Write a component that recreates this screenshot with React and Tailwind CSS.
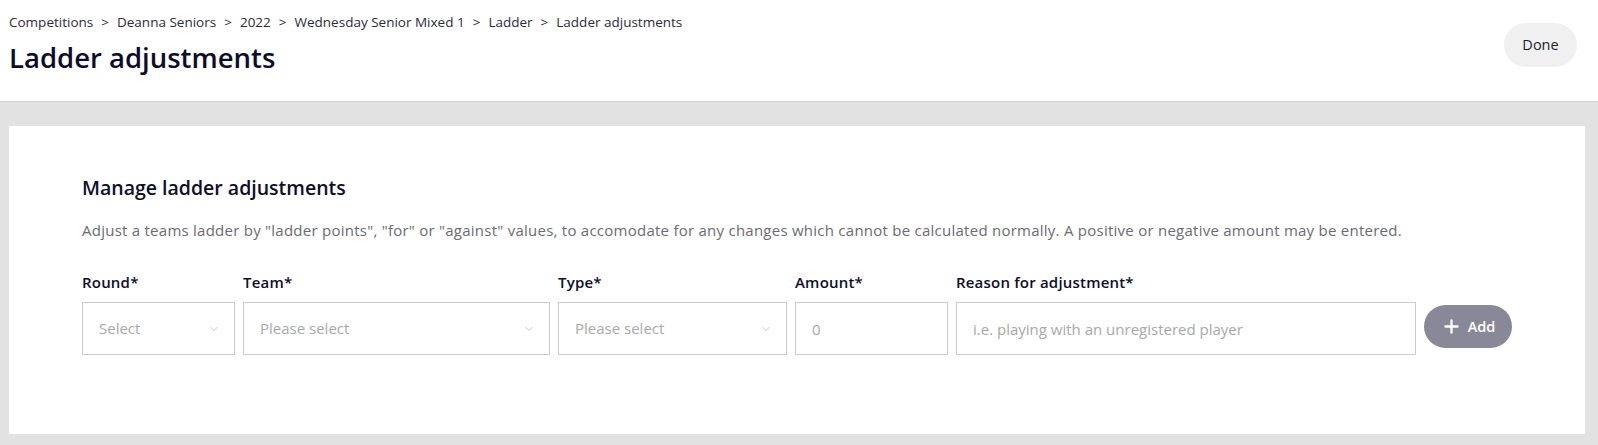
import { ChevronDown, Plus } from 'lucide-react'

const crumbs = ['Competitions', 'Deanna Seniors', '2022', 'Wednesday Senior Mixed 1', 'Ladder', 'Ladder adjustments']

export default function App() {
  return (
    <div className="min-h-[445px] bg-[#e2e2e2] font-['Open_Sans',sans-serif] text-[#0d0d2b]">
      {/* Page header */}
      <div className="h-[102px] bg-white border-b border-[#d2d2d2] flex items-start justify-between pl-[9px] pr-[21px]">
        <div>
          <div className="mt-[13px] flex items-center text-[13.5px] text-[#2b2b3b] leading-[18px]">
            {crumbs.map((c, i) => (
              <span key={c} className="flex items-center">
                {i > 0 && <span className="mx-[8px]">&gt;</span>}
                <span>{c}</span>
              </span>
            ))}
          </div>
          <h1 className="mt-[10px] text-[27.5px] font-semibold leading-[34px]">Ladder adjustments</h1>
        </div>
        <button
          type="button"
          className="mt-[23px] h-[44px] w-[73px] rounded-full bg-[#f0f0f0] text-[14.5px] text-[#1d1d2d]"
        >
          Done
        </button>
      </div>

      {/* Card */}
      <div className="pt-[24px] pl-[9px] pr-[13px] pb-[11px]">
        <div className="bg-white h-[308px] pl-[73px] pt-[49px]">
          <h2 className="text-[19.5px] font-semibold leading-[26px]">Manage ladder adjustments</h2>
          <p className="mt-[19px] text-[15px] text-[#6b6b72] leading-[20px] tracking-[0.25px]">
            Adjust a teams ladder by "ladder points", "for" or "against" values, to accomodate for any changes which cannot be calculated normally. A positive or negative amount may be entered.
          </p>

          <div className="mt-[32px] flex items-start gap-[8px]">
            <Field label="Round*" width="w-[153px]">
              <SelectBox placeholder="Select" />
            </Field>
            <Field label="Team*" width="w-[307px]">
              <SelectBox placeholder="Please select" />
            </Field>
            <Field label="Type*" width="w-[229px]">
              <SelectBox placeholder="Please select" />
            </Field>
            <Field label="Amount*" width="w-[153px]">
              <TextBox placeholder="0" />
            </Field>
            <Field label="Reason for adjustment*" width="w-[460px]">
              <TextBox placeholder="i.e. playing with an unregistered player" />
            </Field>
            <button
              type="button"
              className="mt-[33px] h-[43px] w-[88px] rounded-full bg-[#888899] text-white text-[14.5px] font-semibold inline-flex items-center justify-center gap-[6px]"
            >
              <Plus size={21} strokeWidth={2.6} />
              Add
            </button>
          </div>
        </div>
      </div>
    </div>
  )
}

function Field({ label, width, children }) {
  return (
    <div className={width}>
      <div className="text-[15px] font-semibold leading-[20px] tracking-[0.2px] text-[#0d0d2b]">{label}</div>
      <div className="mt-[10px]">{children}</div>
    </div>
  )
}

function SelectBox({ placeholder }) {
  return (
    <div className="h-[53px] border border-[#cccccc] flex items-center justify-between pl-[16px] pr-[14px]">
      <span className="text-[15px] text-[#a8a8a8]">{placeholder}</span>
      <ChevronDown size={12} strokeWidth={1.5} className="text-[#b0b0b0]" />
    </div>
  )
}

function TextBox({ placeholder }) {
  return (
    <input
      type="text"
      placeholder={placeholder}
      className="h-[53px] w-full border border-[#cccccc] px-[16px] text-[15px] outline-none placeholder:text-[#a8a8a8]"
    />
  )
}
